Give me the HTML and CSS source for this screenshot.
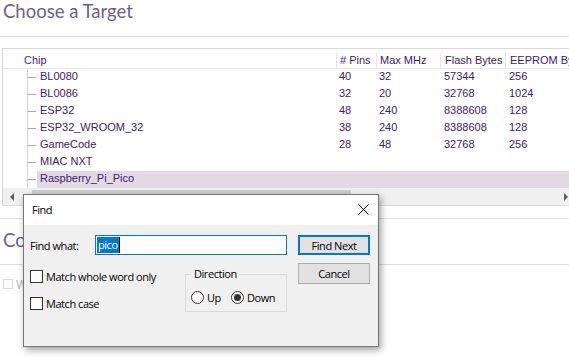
FILE: index.html
```html
<!DOCTYPE html>
<html>
<head>
<meta charset="utf-8">
<link rel="stylesheet" href="styles.css">
</head>
<body>
<div class="page">
  <h1 class="title">Choose a Target</h1>
  <div class="gridbox">
    <div class="thead">
      <div class="h h-chip">Chip</div>
      <div class="h h-pins">&#35; Pins</div>
      <div class="h h-mhz">Max MHz</div>
      <div class="h h-flash">Flash Bytes</div>
      <div class="h h-eeprom">EEPROM Bytes</div>
    </div>
    <div class="tbody">
      <div class="row"><div class="tree"><span class="tick"></span></div><div class="cells"><div class="c c-chip">BL0080</div><div class="c c-pins">40</div><div class="c c-mhz">32</div><div class="c c-flash">57344</div><div class="c c-eeprom">256</div></div></div>
      <div class="row"><div class="tree"><span class="tick"></span></div><div class="cells"><div class="c c-chip">BL0086</div><div class="c c-pins">32</div><div class="c c-mhz">20</div><div class="c c-flash">32768</div><div class="c c-eeprom">1024</div></div></div>
      <div class="row"><div class="tree"><span class="tick"></span></div><div class="cells"><div class="c c-chip">ESP32</div><div class="c c-pins">48</div><div class="c c-mhz">240</div><div class="c c-flash">8388608</div><div class="c c-eeprom">128</div></div></div>
      <div class="row"><div class="tree"><span class="tick"></span></div><div class="cells"><div class="c c-chip">ESP32_WROOM_32</div><div class="c c-pins">38</div><div class="c c-mhz">240</div><div class="c c-flash">8388608</div><div class="c c-eeprom">128</div></div></div>
      <div class="row"><div class="tree"><span class="tick"></span></div><div class="cells"><div class="c c-chip">GameCode</div><div class="c c-pins">28</div><div class="c c-mhz">48</div><div class="c c-flash">32768</div><div class="c c-eeprom">256</div></div></div>
      <div class="row"><div class="tree"><span class="tick"></span></div><div class="cells"><div class="c c-chip">MIAC NXT</div><div class="c c-pins"></div><div class="c c-mhz"></div><div class="c c-flash"></div><div class="c c-eeprom"></div></div></div>
      <div class="row"><div class="tree"><span class="tick"></span></div><div class="cells sel"><div class="c c-chip">Raspberry_Pi_Pico</div><div class="c c-pins"></div><div class="c c-mhz"></div><div class="c c-flash"></div><div class="c c-eeprom"></div></div></div>
    </div>
    <div class="hscroll">
      <div class="arrow-l"></div>
      <div class="track"><div class="thumb"></div></div>
      <div class="arrow-r"></div>
    </div>
  </div>
  <h2 class="subtitle">Compile Options</h2>
  <div class="dis-check"><span class="dis-box"></span><span class="dis-label">Warnings</span></div>
</div>

<div class="dialog">
  <div class="dlg-title">
    <span>Find</span>
    <svg class="close" width="11" height="11" viewBox="0 0 11 11"><path d="M0.5 0.5 L10.5 10.5 M10.5 0.5 L0.5 10.5" stroke="#000" stroke-width="1" fill="none"/></svg>
  </div>
  <div class="dlg-body">
    <div class="dlg-left">
      <div class="find-row">
        <label class="find-label">Find what:</label>
        <div class="input"><span class="selected">pico</span><span class="caret"></span></div>
      </div>
      <div class="opt-row">
        <div class="checks">
          <div class="check"><span class="cbox"></span><span>Match whole word only</span></div>
          <div class="check second"><span class="cbox"></span><span>Match case</span></div>
        </div>
        <fieldset class="direction">
          <legend>Direction</legend>
          <div class="radios">
            <div class="radio up"><span class="rbox"></span><span>Up</span></div>
            <div class="radio"><span class="rbox on"></span><span>Down</span></div>
          </div>
        </fieldset>
      </div>
    </div>
    <div class="dlg-buttons">
      <div class="btn primary">Find Next</div>
      <div class="btn">Cancel</div>
    </div>
  </div>
</div>
</body>
</html>
```
FILE: styles.css
```css
* { box-sizing: border-box; }
html, body { margin: 0; padding: 0; }
body {
  width: 569px;
  height: 357px;
  overflow: hidden;
  background: #fff;
  position: relative;
  font-family: "Liberation Sans", Arial, sans-serif;
}
.page { width: 569px; overflow: hidden; }

.title {
  margin: 0;
  height: 37px;
  padding: 0 0 0 3px;
  font: 400 18.5px/22px Lato, "Open Sans", sans-serif;
  color: #6c5e94;
  border-bottom: 1px solid #e3dbe3;
}

.gridbox {
  margin: 11px 0 0 2px;
  width: 640px;
  border: 1px solid #d9d9d9;
  border-right: none;
  border-bottom-color: #e3dbe3;
  font-size: 11px;
  color: #3a2170;
}
.thead {
  display: flex;
  height: 20px;
  padding-top: 4px;
  border-bottom: 1px solid #e8e8e8;
}
.h { height: 15px; line-height: 15px; white-space: nowrap; }
.h-chip { width: 333px; padding-left: 21px; color: #4a1d8c; }
.h-pins { width: 40px; padding-left: 3px; border-left: 1px solid #e5e5e5; }
.h-mhz { width: 64px; padding-left: 3px; border-left: 1px solid #e5e5e5; }
.h-flash { width: 65px; padding-left: 4px; border-left: 1px solid #e5e5e5; }
.h-eeprom { width: 120px; padding-left: 4px; border-left: 1px solid #e5e5e5; }

.row { display: flex; height: 17px; }
.tree {
  width: 34px;
  height: 17px;
  position: relative;
}
.tree::before {
  content: "";
  position: absolute;
  left: 24px;
  top: 0;
  bottom: 0;
  border-left: 1px solid #d0d0d0;
}
.tick {
  position: absolute;
  left: 25px;
  top: 8px;
  width: 8px;
  border-top: 1px solid #a8a8a8;
}
.cells { display: flex; flex: 1; height: 17px; }
.cells.sel { background: #e3d9e3; }
.c { height: 17px; line-height: 15px; white-space: nowrap; }
.c-chip { width: 299px; padding-left: 3px; }
.c-pins { width: 40px; padding-left: 3px; }
.c-mhz { width: 64px; padding-left: 3px; }
.c-flash { width: 65px; padding-left: 4px; }
.c-eeprom { flex: 1; padding-left: 4px; }

.hscroll {
  display: flex;
  height: 17px;
  background: #f0f0f0;
  width: 567px;
}
.arrow-l, .arrow-r { width: 17px; height: 17px; position: relative; }
.arrow-l::after {
  content: "";
  position: absolute;
  left: 7px; top: 5px;
  border-right: 4px solid #606060;
  border-top: 4px solid transparent;
  border-bottom: 4px solid transparent;
}
.arrow-r::after {
  content: "";
  position: absolute;
  right: 2px; top: 5px;
  border-left: 4px solid #606060;
  border-top: 4px solid transparent;
  border-bottom: 4px solid transparent;
}
.track { flex: 1; padding: 2px 0; }
.thumb { margin-left: 12px; width: 319px; height: 13px; background: #cdcdcd; }

.subtitle {
  margin: 12px 0 0;
  height: 47px;
  padding: 10px 0 0 3px;
  font: 400 18.5px/22px Lato, "Open Sans", sans-serif;
  color: #6c5e94;
  border-top: 1px solid #e0dce0;
  border-bottom: 1px solid #e3dbe3;
}
.dis-check {
  display: flex;
  align-items: center;
  margin: 14px 0 0 3px;
  height: 10px;
  gap: 3px;
}
.dis-box { width: 10px; height: 10px; border: 1px solid #d6d6d6; }
.dis-label { font: 12px "Open Sans", sans-serif; color: #b5aec5; }

/* Find dialog */
.dialog {
  position: absolute;
  left: 23px;
  top: 194px;
  width: 356px;
  height: 153px;
  border: 1px solid #777;
  background: #f0f0f0;
  box-shadow: 2px 3px 7px rgba(0, 0, 0, 0.38);
  font: 11px "Open Sans", sans-serif;
  letter-spacing: -0.45px;
  color: #000;
  display: flex;
  flex-direction: column;
}
.dlg-title {
  height: 30px;
  background: #fff;
  display: flex;
  align-items: center;
  justify-content: space-between;
  padding: 0 9px 1px 8px;
}
.close { display: block; }
.dlg-body {
  flex: 1;
  display: flex;
  padding: 10px 7px 0 6px;
}
.dlg-left { width: 257px; }
.find-row { display: flex; align-items: center; height: 20px; }
.find-label { width: 65px; }
.input {
  width: 192px;
  height: 20px;
  border: 1px solid #0078d7;
  background: #fff;
  display: flex;
  align-items: center;
  padding-left: 1px;
}
.selected {
  background: #0078d7;
  color: #fff;
  height: 16px;
  line-height: 16px;
  padding: 0 1px;
}
.caret { width: 1px; height: 16px; background: #000; }

.opt-row { display: flex; }
.checks { width: 155px; padding-top: 15px; }
.check { display: flex; align-items: center; gap: 3px; height: 13px; white-space: nowrap; }
.check.second { margin-top: 14px; }
.cbox { width: 13px; height: 13px; border: 1px solid #333; background: #fff; flex: none; }

.direction {
  margin: 11px 0 0;
  width: 102px;
  height: 46px;
  border: 1px solid #dcdcdc;
  padding: 0 0 0 5px;
  min-width: 0;
}
.direction legend {
  padding: 0 2px 0 3px;
  line-height: 16px;
  margin-left: 0;
}
.radios { display: flex; margin-top: 9px; }
.radio { display: flex; align-items: center; gap: 3px; height: 13px; }
.radio.up { width: 40px; }
.rbox {
  width: 13px; height: 13px;
  border: 1px solid #333;
  border-radius: 50%;
  background: #fff;
  position: relative;
  flex: none;
}
.rbox.on::after {
  content: "";
  position: absolute;
  left: 2px; top: 2px;
  width: 7px; height: 7px;
  border-radius: 50%;
  background: #333;
}

.dlg-buttons { margin-left: 11px; width: 72px; display: flex; flex-direction: column; gap: 8px; }
.btn {
  height: 21px;
  border: 1px solid #adadad;
  background: #e1e1e1;
  display: flex;
  align-items: center;
  justify-content: center;
}
.btn.primary { height: 20px; border: 2px solid #0078d7; }
```
